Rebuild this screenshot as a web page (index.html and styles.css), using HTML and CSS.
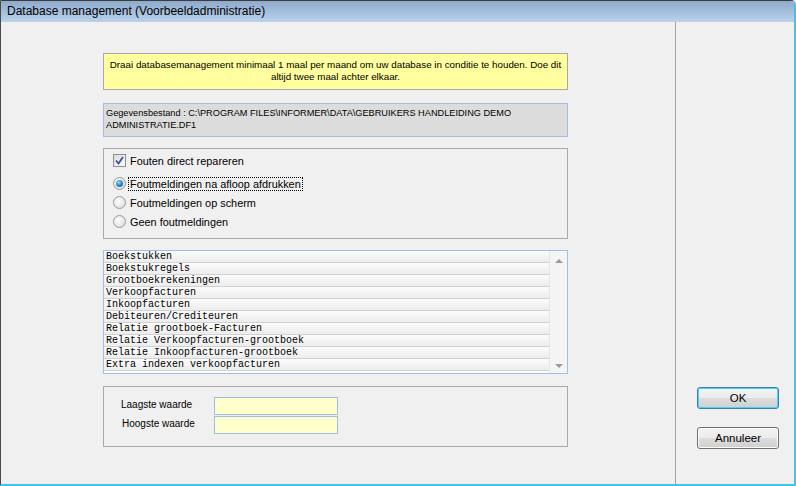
FILE: index.html
```html
<!DOCTYPE html>
<html>
<head>
<meta charset="utf-8">
<link rel="stylesheet" href="styles.css">
</head>
<body>
<div class="window">
  <div class="titlebar">Database management (Voorbeeldadministratie)</div>
  <div class="main">
    <div class="content">
      <div class="notice">Draai databasemanagement minimaal 1 maal per maand om uw database in conditie te houden. Doe dit altijd twee maal achter elkaar.</div>
      <div class="path">Gegevensbestand : C:\PROGRAM FILES\INFORMER\DATA\GEBRUIKERS HANDLEIDING DEMO ADMINISTRATIE.DF1</div>
      <div class="options">
        <div class="opt"><span class="check"><svg width="9" height="9" viewBox="0 0 9 9"><path d="M1 4.5 L3.5 7.5 L8 1" fill="none" stroke="#3a52a0" stroke-width="1.8"/></svg></span><span>Fouten direct repareren</span></div>
        <div class="opt opt-radio"><span class="radio on"></span><span class="focus">Foutmeldingen na afloop afdrukken</span></div>
        <div class="opt opt-radio"><span class="radio"></span><span>Foutmeldingen op scherm</span></div>
        <div class="opt opt-radio"><span class="radio"></span><span>Geen foutmeldingen</span></div>
      </div>
      <div class="list">
        <div class="rows">
          <div class="row">Boekstukken</div>
          <div class="row">Boekstukregels</div>
          <div class="row">Grootboekrekeningen</div>
          <div class="row">Verkoopfacturen</div>
          <div class="row">Inkoopfacturen</div>
          <div class="row">Debiteuren/Crediteuren</div>
          <div class="row">Relatie grootboek-Facturen</div>
          <div class="row">Relatie Verkoopfacturen-grootboek</div>
          <div class="row">Relatie Inkoopfacturen-grootboek</div>
          <div class="row">Extra indexen verkoopfacturen</div>
        </div>
        <div class="scrollbar">
          <span class="arrow up"></span>
          <span class="arrow down"></span>
        </div>
      </div>
      <div class="range">
        <div class="field"><span class="label">Laagste waarde</span><span class="input"></span></div>
        <div class="field"><span class="label">Hoogste waarde</span><span class="input"></span></div>
      </div>
    </div>
    <div class="side">
      <button class="btn default">OK</button>
      <button class="btn">Annuleer</button>
    </div>
  </div>
</div>
</body>
</html>
```
FILE: styles.css
```css
* { box-sizing: border-box; }
html, body { margin: 0; padding: 0; }
body { width: 796px; height: 486px; overflow: hidden; background: #f0f0f0; }

.window {
  width: 796px;
  height: 486px;
  display: flex;
  flex-direction: column;
  background: #f0f0f0;
  border-left: 1px solid #4a4a4a;
  border-right: 2px solid #40c4ec;
  border-bottom: 2px solid #40c4ec;
  border-top: 1px solid #3c3c3c;
  border-top-right-radius: 5px;
  font-family: "Liberation Sans", Arial, sans-serif;
}

.titlebar {
  height: 21px;
  flex: none;
  background: linear-gradient(#8eaacb, #bad2eb);
  color: #000;
  font-size: 12px;
  line-height: 21px;
  padding-left: 6px;
  border-top-right-radius: 4px;
}

.main {
  flex: 1;
  display: flex;
}

.content {
  width: 675px;
  flex: none;
  border-right: 1px solid #a0a0a0;
  padding: 31px 0 0 102px;
}

.notice {
  width: 465px;
  height: 37px;
  background: #ffff9f;
  border: 1px solid #a8a8a8;
  font-size: 9.8px;
  line-height: 12px;
  text-align: center;
  padding: 5px 1px 0;
  color: #000;
}

.path {
  width: 465px;
  height: 34px;
  margin-top: 13px;
  background: #dcdcdc;
  border: 1px solid #a4bce4;
  font-size: 9.2px;
  line-height: 12px;
  padding: 3px 2px 0;
  color: #000;
}

.options {
  width: 465px;
  height: 91px;
  margin-top: 11px;
  border: 1px solid #a8a8a8;
  padding: 5px 0 0 9px;
  font-size: 10.9px;
  color: #000;
}

.opt {
  display: flex;
  align-items: center;
  height: 13px;
  gap: 4px;
}
.opt:nth-child(2) { margin-top: 10px; }
.opt:nth-child(3), .opt:nth-child(4) { margin-top: 6px; }

.check {
  width: 13px;
  height: 13px;
  border: 1px solid #8e8f8f;
  background: linear-gradient(135deg, #dcdcdc, #fbfbfb);
  display: flex;
  align-items: center;
  justify-content: center;
  padding: 0;
}
.check svg { display: block; }

.radio {
  width: 13px;
  height: 13px;
  border-radius: 50%;
  border: 1px solid #9a9a9a;
  background: radial-gradient(circle at 40% 40%, #fdfdfd, #d6d6d6);
  display: inline-block;
  position: relative;
}
.radio.on::after {
  content: "";
  position: absolute;
  left: 2px;
  top: 2px;
  width: 7px;
  height: 7px;
  border-radius: 50%;
  background: radial-gradient(circle at 40% 35%, #8ee0ff, #1a78c0 60%, #0d4a80);
}

.focus {
  outline: 1px dotted #000;
  outline-offset: 0;
  padding: 0 1px;
  margin-left: -1px;
}

.list {
  width: 465px;
  height: 124px;
  margin-top: 11px;
  border: 1px solid #a4bce4;
  background: #fff;
  display: flex;
}

.rows {
  width: 445px;
  flex: none;
}

.row {
  height: 12px;
  font-family: "Liberation Mono", "Courier New", monospace;
  font-size: 10px;
  line-height: 11px;
  padding-left: 2px;
  background: linear-gradient(#fcfcfc, #ececec);
  border-bottom: 1px solid #d2d2d2;
  color: #000;
  white-space: nowrap;
}

.scrollbar {
  flex: 1;
  background: #f4f4f4;
  border-left: 1px solid #e6e6e6;
  display: flex;
  flex-direction: column;
  justify-content: space-between;
  align-items: center;
  padding: 8px 0 5px;
}

.arrow {
  width: 0;
  height: 0;
  border-left: 4px solid transparent;
  border-right: 4px solid transparent;
}
.arrow.up { border-bottom: 4px solid #9a9a9a; }
.arrow.down { border-top: 4px solid #9a9a9a; }

.range {
  width: 465px;
  height: 61px;
  margin-top: 12px;
  border: 1px solid #a8a8a8;
  padding: 10px 0 0 0;
  font-size: 10px;
  color: #000;
}

.field {
  display: flex;
  align-items: center;
  height: 18px;
  margin-bottom: 1px;
}

.label {
  width: 110px;
  padding-left: 17px;
  padding-bottom: 3px;
}
.field:nth-child(2) .label { padding-left: 18px; }

.input {
  width: 124px;
  height: 18px;
  background: #ffffcc;
  border: 1px solid #a0bce8;
}

.side {
  flex: 1;
  display: flex;
  flex-direction: column;
  align-items: flex-start;
  padding: 365px 0 0 21px;
  gap: 18px;
}

.btn {
  width: 82px;
  height: 22px;
  margin: 0;
  font-family: "Liberation Sans", Arial, sans-serif;
  font-size: 11.5px;
  color: #000;
  border: 1px solid #707070;
  border-radius: 3px;
  background: linear-gradient(#f4f4f4 0%, #ebebeb 48%, #dddddd 52%, #cfcfcf 100%);
  padding: 0;
  box-shadow: inset 0 0 0 1px #fbfbfb;
}
.btn.default {
  border-color: #3c7fb1;
  box-shadow: inset 0 0 0 1px #48d3fb;
}
```
